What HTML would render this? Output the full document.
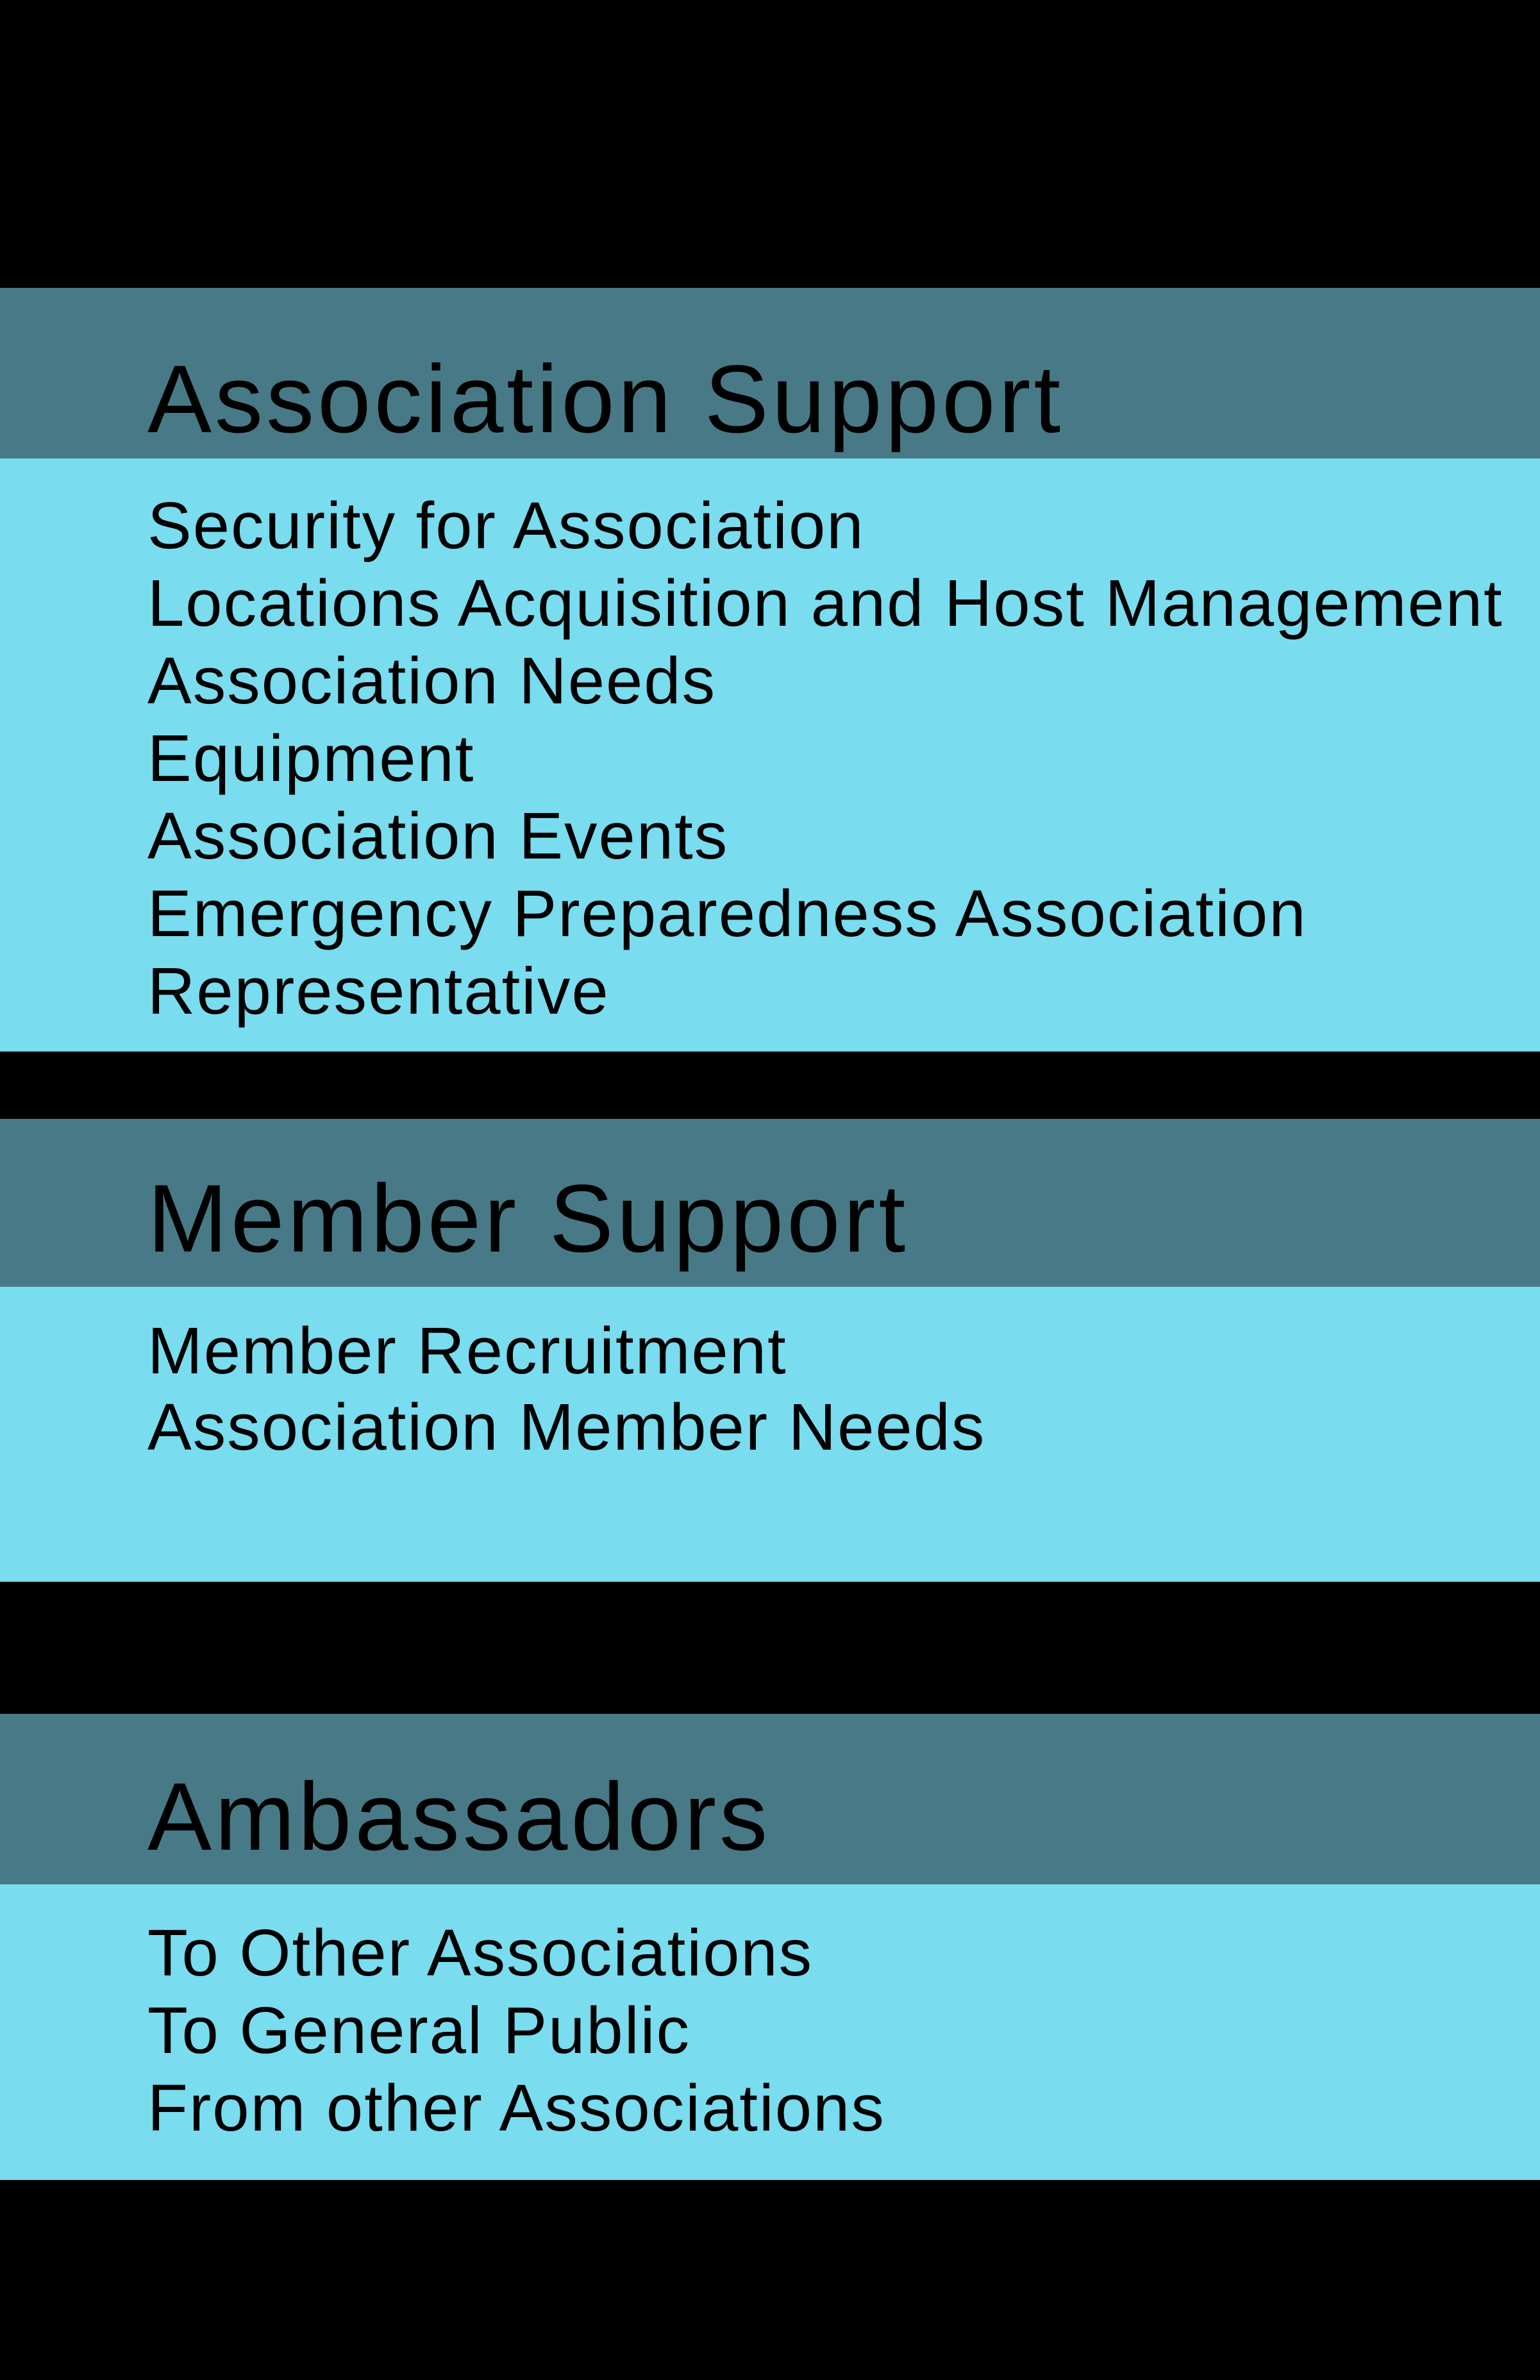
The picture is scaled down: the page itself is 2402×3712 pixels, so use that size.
<!DOCTYPE html>
<html><head><meta charset="utf-8"><style>
html,body{margin:0;padding:0;background:#000;}
body{width:2402px;height:3712px;position:relative;overflow:hidden;font-family:"Liberation Sans",sans-serif;color:#000;}
.d{position:absolute;left:0;width:2402px;background:#477a86;}
.l{position:absolute;left:0;width:2402px;background:#79dcef;}
.h{position:absolute;left:230px;font-size:150px;line-height:150px;letter-spacing:5px;white-space:nowrap;}
.b{position:absolute;left:230px;font-size:103px;line-height:121px;letter-spacing:2px;white-space:nowrap;}
</style></head><body>
<div class="d" style="top:449px;height:266px"></div>
<div class="l" style="top:715px;height:925px"></div>
<div class="d" style="top:1745px;height:262px"></div>
<div class="l" style="top:2007px;height:460px"></div>
<div class="d" style="top:2673px;height:266px"></div>
<div class="l" style="top:2939px;height:461px"></div>

<div class="h" style="top:547px">Association Support</div>
<div class="b" style="top:759px">Security for Association<br>Locations Acquisition and Host Management<br>Association Needs<br>Equipment<br>Association Events<br>Emergency Preparedness Association<br>Representative</div>

<div class="h" style="top:1825px">Member Support</div>
<div class="b" style="top:2047px;line-height:119px">Member Recruitment<br>Association Member Needs</div>

<div class="h" style="top:2758px">Ambassadors</div>
<div class="b" style="top:2985px">To Other Associations<br>To General Public<br>From other Associations</div>
</body></html>
